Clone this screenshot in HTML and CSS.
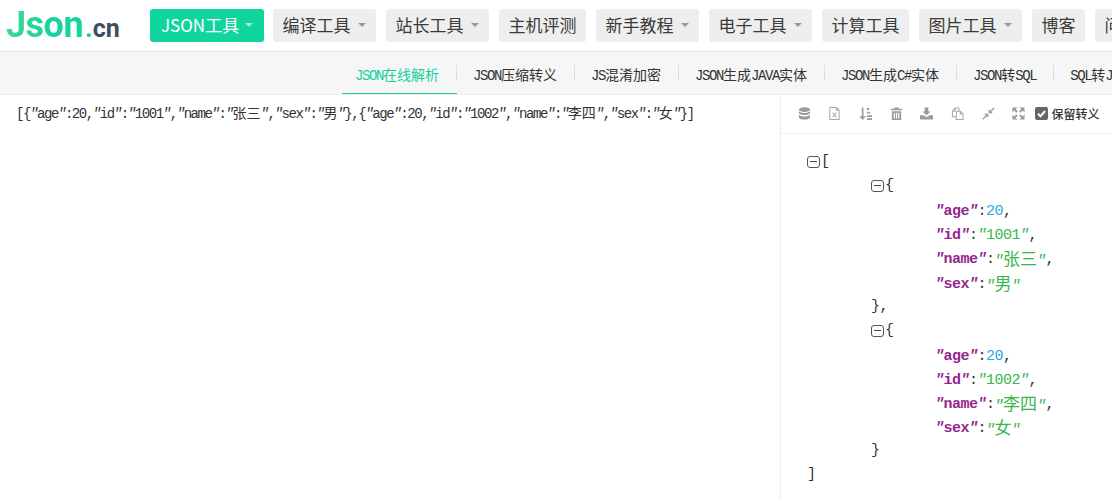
FILE: index.html
```html
<!DOCTYPE html>
<html lang="zh-CN">
<head>
<meta charset="utf-8">
<title>JSON在线解析</title>
<link rel="stylesheet" href="styles.css">
</head>
<body>
<header class="topbar">
  <a class="logo"><span class="logo-main">Json</span><span class="logo-dot">.</span><span class="logo-cn">cn</span></a>
  <nav class="mainnav">
    <a class="btn active">JSON工具<i class="caret"></i></a>
    <a class="btn">编译工具<i class="caret"></i></a>
    <a class="btn">站长工具<i class="caret"></i></a>
    <a class="btn">主机评测</a>
    <a class="btn">新手教程<i class="caret"></i></a>
    <a class="btn">电子工具<i class="caret"></i></a>
    <a class="btn">计算工具</a>
    <a class="btn">图片工具<i class="caret"></i></a>
    <a class="btn">博客</a>
    <a class="btn">问答</a>
  </nav>
</header>
<nav class="subnav">
  <a class="tab on">JSON<span class="zh">在线解析</span></a>
  <a class="tab">JSON<span class="zh">压缩转义</span></a>
  <a class="tab">JS<span class="zh">混淆加密</span></a>
  <a class="tab">JSON<span class="zh">生成</span>JAVA<span class="zh">实体</span></a>
  <a class="tab">JSON<span class="zh">生成</span>C#<span class="zh">实体</span></a>
  <a class="tab">JSON<span class="zh">转</span>SQL</a>
  <a class="tab">SQL<span class="zh">转</span>JSON</a>
</nav>
<main class="workspace">
  <section class="source">[{<em>"</em>age<em>"</em>:20,<em>"</em>id<em>"</em>:<em>"</em>1001<em>"</em>,<em>"</em>name<em>"</em>:<em>"</em><span class="zh">张三</span><em>"</em>,<em>"</em>sex<em>"</em>:<em>"</em><span class="zh">男</span><em>"</em>},{<em>"</em>age<em>"</em>:20,<em>"</em>id<em>"</em>:<em>"</em>1002<em>"</em>,<em>"</em>name<em>"</em>:<em>"</em><span class="zh">李四</span><em>"</em>,<em>"</em>sex<em>"</em>:<em>"</em><span class="zh">女</span><em>"</em>}]</section>
  <section class="result">
    <div class="toolbar">
      <svg class="tool" viewBox="0 0 14 14"><ellipse cx="7" cy="2.800" rx="6" ry="2.600"/><path d="M1 4.600v2C2 8 4.600 8.500 7 8.500s5-.5 6-1.900v-2C12 6 9.400 6.500 7 6.500S2 6 1 4.600zM1 8.300v2.900C2 12.900 4.600 13.500 7 13.500s5-.6 6-2.300V8.300C12 9.700 9.400 10.200 7 10.200S2 9.700 1 8.300z"/></svg>
      <svg class="tool line" viewBox="0 0 14 14"><path d="M2 .5h7l3 3v10H2zM9 .5v3h3"/><path d="M5 6l4 5M9 6l-4 5"/></svg>
      <svg class="tool" viewBox="0 0 14 14"><path d="M3 .5h1.800V10H7.500L3.900 14 .3 10H3zM8.500 1h2.500v2.200H8.500zM8.500 5.200h3.500v1.800H8.500zM8.500 9h5.500v1.800H8.500zM8.500 12.200h5.500V14H8.500z"/></svg>
      <svg class="tool" viewBox="0 0 14 14"><path d="M5 .5h4l.6 1.500H13v1.600H1V2h3.400zM2 4.600h10V14H2zM4 6.300v6h1.300v-6zM6.350 6.300v6h1.300v-6zM8.700 6.300v6H10v-6z"/></svg>
      <svg class="tool" viewBox="0 0 14 14"><path d="M5 .5h4v4.300h2.400L7 9 2.600 4.800H5zM0 8.800h3.800L7 11l3.200-2.200H14v4.700H0z"/></svg>
      <svg class="tool line" viewBox="0 0 14 14"><path d="M5.500 10.500h-4V4.500l3-3.500h4v3.500M1.500 4.500h3V1M6 4.500h4l3 3v6H5.500zM10 4.500v3h3"/></svg>
      <svg class="tool" viewBox="0 0 14 14"><path d="M12.800.4l.9.900L10 5l1.700 1.800H7.200V2.300L9 4.100zM.3 12.700l3.700-3.700-1.700-1.800h4.500v4.500L5 9.900l-3.800 3.800z"/></svg>
      <svg class="tool" viewBox="0 0 14 14"><path d="M.5.500h5.300L3.900 2.400 6.200 4.700 4.700 6.200 2.400 3.900.5 5.800zM13.500.5v5.300l-1.900-1.900L9.300 6.200 7.800 4.700l2.300-2.300L8.200.5zM.5 13.500V8.200l1.900 1.900L4.700 7.800l1.500 1.500-2.300 2.300 1.900 1.900zM13.500 13.500H8.200l1.900-1.900-2.300-2.300 1.500-1.500 2.300 2.300 1.900-1.900z"/></svg>
      <label class="keep"><span class="check"><svg viewBox="0 0 13 13"><path d="M3 6.800l2.500 2.500 4.500-5.300"/></svg></span>保留转义</label>
    </div>
    <div class="tree">
      <div class="row"><i class="toggle"></i>[</div>
      <div class="row in1"><i class="toggle"></i>{</div>
      <div class="row in2"><b class="key"><em>"</em>age<em>"</em></b>:<span class="num">20</span>,</div>
      <div class="row in2"><b class="key"><em>"</em>id<em>"</em></b>:<span class="str"><em>"</em>1001<em>"</em></span>,</div>
      <div class="row in2"><b class="key"><em>"</em>name<em>"</em></b>:<span class="str"><em>"</em><span class="zhb">张三</span><em>"</em></span>,</div>
      <div class="row in2"><b class="key"><em>"</em>sex<em>"</em></b>:<span class="str"><em>"</em><span class="zhb">男</span><em>"</em></span></div>
      <div class="row in1">},</div>
      <div class="row in1"><i class="toggle"></i>{</div>
      <div class="row in2"><b class="key"><em>"</em>age<em>"</em></b>:<span class="num">20</span>,</div>
      <div class="row in2"><b class="key"><em>"</em>id<em>"</em></b>:<span class="str"><em>"</em>1002<em>"</em></span>,</div>
      <div class="row in2"><b class="key"><em>"</em>name<em>"</em></b>:<span class="str"><em>"</em><span class="zhb">李四</span><em>"</em></span>,</div>
      <div class="row in2"><b class="key"><em>"</em>sex<em>"</em></b>:<span class="str"><em>"</em><span class="zhb">女</span><em>"</em></span></div>
      <div class="row in1">}</div>
      <div class="row">]</div>
    </div>
  </section>
</main>
</body>
</html>
```
FILE: styles.css
```css
* { box-sizing: border-box; }
html, body { margin: 0; height: 100%; overflow: hidden; }
body {
  width: 1112px;
  height: 501px;
  background: #fff;
  color: #333;
  font-family: "Noto Sans CJK SC", "Noto Sans", sans-serif;
  display: flex;
  flex-direction: column;
}
.topbar {
  height: 52px;
  flex: none;
  display: flex;
  align-items: flex-start;
  border-bottom: 1px solid #e6e6e6;
  padding-left: 6px;
  overflow: hidden;
}
.logo {
  flex: none;
  width: 144px;
  height: 42px;
  font-family: Roboto, sans-serif;
  font-weight: 700;
  white-space: nowrap;
  line-height: 50px;
}
.logo-main {
  font-size: 36px;
  letter-spacing: -.5px;
  background: linear-gradient(90deg, #3ed98f, #14d3a0 60%, #12d6a0);
  -webkit-background-clip: text;
  background-clip: text;
  color: transparent;
}
.logo-dot { font-size: 26px; color: #17cf99; margin-left: 2px; }
.logo-cn { font-size: 25px; color: #3f4e5e; }
.mainnav {
  display: flex;
  gap: 10px;
  padding-top: 9px;
  flex: none;
}
.btn {
  height: 33px;
  padding: 0 9.5px 1px;
  display: flex;
  align-items: center;
  flex: none;
  font-size: 17px;
  line-height: 32px;
  color: #3a3a3a;
  background: #eee;
  border-radius: 3px;
  white-space: nowrap;
}
.btn.active {
  width: 114px;
  margin-right: -1px;
  padding-left: 11px;
  background: #10d69d;
  color: #fff;
}
.caret {
  display: block;
  margin: 0 .5px 0 7.5px;
  width: 0;
  height: 0;
  border-left: 4px solid transparent;
  border-right: 4px solid transparent;
  border-top: 4px solid #999;
}
.active .caret { border-top-color: #9feed8; margin-left: 6px; }

.subnav {
  height: 43px;
  flex: none;
  display: flex;
  align-items: flex-start;
  background: #f6f6f6;
  padding-left: 342px;
  border-bottom: 1px solid #eee;
  overflow: hidden;
  white-space: nowrap;
  font-family: "Liberation Mono", monospace;
  font-size: 14px;
  letter-spacing: -1.4px;
  color: #333;
}
.zh { font-family: "Noto Sans CJK SC", sans-serif; font-size: 14px; letter-spacing: 0; }
.tab {
  position: relative;
  flex: none;
  height: 42px;
  line-height: 44px;
  padding: 0 18px 0 16px;
}
.tab::after {
  content: "";
  position: absolute;
  right: 0;
  top: 13px;
  height: 16px;
  width: 1px;
  background: #ddd;
}
.tab.on {
  color: #14cf9c;
  padding: 0 18px 0 13px;
  border-bottom: 1px solid #14cf9c;
}

.workspace {
  flex: 1;
  min-height: 0;
  display: flex;
}
.source {
  width: 781px;
  flex: none;
  padding: 7px 16px;
  border-right: 1px solid #eee;
  font-family: "Liberation Mono", monospace;
  font-size: 14px;
  letter-spacing: -1.42px;
  line-height: 20px;
  color: #333;
  white-space: nowrap;
  overflow: hidden;
}
em { font-style: italic; }
.result { flex: 1; min-width: 0; overflow: hidden; }
.toolbar {
  height: 39px;
  display: flex;
  align-items: center;
  padding: 0 0 2px 16.5px;
  border-bottom: 1px solid #eee;
}
.tool {
  width: 13px;
  height: 13px;
  flex: none;
  fill: #9a9a9a;
  margin-right: 17.7px;
}
.tool.line { fill: none; stroke: #a8a8a8; stroke-width: 1.1; }
.keep {
  display: flex;
  align-items: center;
  margin-left: -8.500px;
  font-size: 12px;
  font-weight: 500;
  color: #333;
  white-space: nowrap;
}
.check {
  width: 13px;
  height: 13px;
  margin-right: 4px;
  background: #666;
  border-radius: 2px;
  display: block;
}
.check svg { display: block; width: 13px; height: 13px; fill: none; stroke: #fff; stroke-width: 2; }
.tree {
  padding: 16px 0 0 26px;
  font-family: "Liberation Mono", monospace;
  font-size: 15px;
  letter-spacing: -.5px;
  color: #333;
}
.row {
  height: 24.1px;
  line-height: 24px;
  display: flex;
  align-items: center;
  white-space: pre;
}
.in1 { padding-left: 64px; }
.in2 { padding-left: 128px; padding-top: 4px; line-height: 20px; }
.toggle {
  position: relative;
  display: block;
  flex: none;
  width: 13px;
  height: 12px;
  margin-right: 1px;
  border: 1px solid #555;
  border-radius: 3px;
}
.toggle::after {
  content: "";
  position: absolute;
  left: 2px;
  right: 2px;
  top: 4px;
  height: 1px;
  background: #444;
}
.key { color: #92278f; font-weight: 700; }
.num { color: #25aae2; }
.str { color: #3ab54a; }
.zhb { font-family: "Noto Sans CJK SC", sans-serif; font-size: 17px; line-height: 20px; letter-spacing: 0; }
```
